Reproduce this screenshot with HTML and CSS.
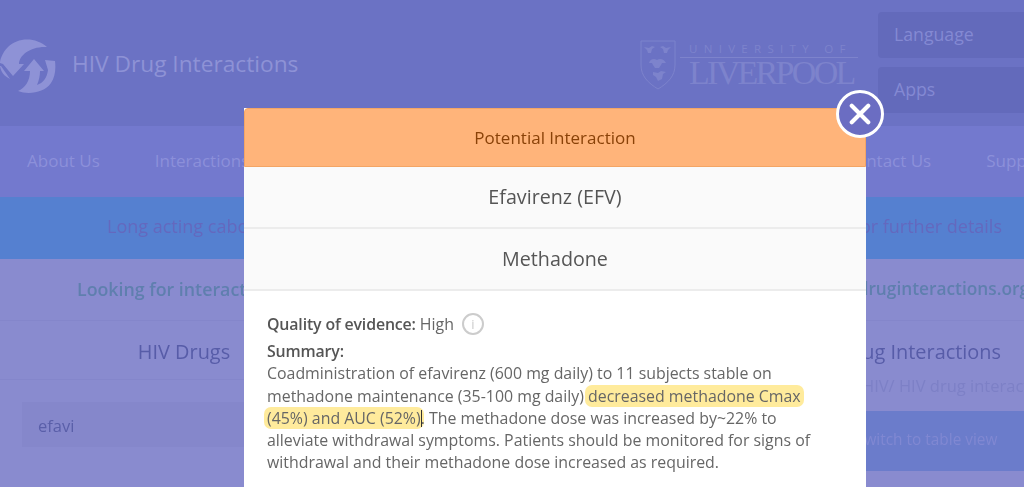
FILE: index.html
```html
<!DOCTYPE html>
<html lang="en">
<head>
<meta charset="utf-8">
<title>HIV Drug Interactions</title>
<link rel="stylesheet" href="styles.css">
</head>
<body>
<div class="page">
  <header class="top">
    <div class="brand">
      <svg class="logo" viewBox="0 0 56 58" aria-hidden="true">
        <path class="logo-fill" d="M47 11C36 1 18 1 8 11 2 17 0 24 0 27L3 28 13 40 24 28H19C19 19 31 10 47 11Z"/>
        <path class="logo-fill" d="M0 30C1 36 4 40 10 43L1 30Z"/>
        <path class="logo-fill" d="M18 55C28 59 44 57 51 47 55 41 56 34 55 25L45 24 48 34C47 42 43 47 37 49 39 44 40 40 40 35L44 35 34 23 24 35H30C30 45 25 52 18 55Z"/>
      </svg>
      <span class="brand-name">HIV Drug Interactions</span>
    </div>
    <div class="uni">
      <svg class="crest" viewBox="0 0 36 50" aria-hidden="true">
        <path class="crest-line" d="M1 1h34v24c0 11-7 18-17 24C8 43 1 36 1 25z"/>
        <path class="crest-fill" d="M4 7l5 1 3-2 3 1-3 2-1 4-3 0-1-3zM31 7l-5 1-3-2-3 1 3 2 1 4 3 0 1-3zM9 23c1-4 5-5 8-3 3-2 7-1 9 3l-4 0-1 2-2 3h-4l-2-3-1-2zM13 32l5 1 3-2 5 1-3 2-1 5-4 2-2-4-3-2z"/>
      </svg>
      <div class="uni-text">
        <span class="uni-of">UNIVERSITY OF</span>
        <span class="uni-name">LIVERPOOL</span>
      </div>
    </div>
    <div class="top-buttons">
      <div class="top-btn">Language</div>
      <div class="top-btn">Apps</div>
    </div>
  </header>
  <nav class="nav">
    <div class="nav-group"><span>About Us</span><span>Interactions</span></div>
    <div class="nav-group"><span>Contact Us</span><span>Support</span></div>
  </nav>
  <div class="alert"><span>Long acting cabotegravir</span><span>for further details</span></div>
  <div class="notice"><span>Looking for interactions</span><span class="notice-link">druginteractions.org</span></div>
  <section class="cols">
    <div class="col col-left">
      <h2 class="col-title">HIV Drugs</h2>
      <div class="search">efavi</div>
    </div>
    <div class="col col-right">
      <h2 class="col-title">Drug Interactions</h2>
      <p class="col-sub">HIV/ HIV drug interactions</p>
      <div class="switch">Switch to table view</div>
    </div>
  </section>
</div>

<div class="overlay">
  <div class="modal">
    <div class="modal-inner">
      <div class="modal-head">Potential Interaction</div>
      <div class="modal-row">Efavirenz (EFV)</div>
      <div class="modal-row">Methadone</div>
      <div class="modal-body">
        <p class="quality"><strong>Quality of evidence:</strong> High <span class="info">i</span></p>
        <p class="summary"><strong>Summary:</strong><br>
        Coadministration of efavirenz (600 mg daily) to 11 subjects stable on methadone maintenance (35-100 mg daily) <mark class="hl">decreased methadone Cmax (45%) and AUC (52%)</mark><span class="caret"></span>. The methadone dose was increased by~22% to alleviate withdrawal symptoms. Patients should be monitored for signs of withdrawal and their methadone dose increased as required.</p>
      </div>
    </div>
    <button class="close" aria-label="Close">
      <svg viewBox="0 0 24 24" aria-hidden="true"><path d="M3 3l18 18M21 3L3 21"/></svg>
    </button>
  </div>
</div>
</body>
</html>
```
FILE: styles.css
```css
* { box-sizing: border-box; }
html, body { margin: 0; height: 487px; overflow: hidden; }
body { font-family: "Open Sans", "Noto Sans", sans-serif; background: #898bcf; position: relative; }

.page { height: 487px; overflow: hidden; filter: blur(0.5px); }

.top { height: 126px; background: #6b72c4; display: flex; align-items: flex-start; }
.brand { display: flex; align-items: center; gap: 16px; width: 640px; padding-top: 36px; }
.logo { width: 56px; height: 58px; flex: none; }
.logo-fill { fill: #8e92d6; }
.brand-name { font-size: 22.7px; color: #8e92d6; font-weight: 500; padding-bottom: 3px; }

.uni { display: flex; width: 238px; padding-top: 40px; }
.crest { width: 36px; height: 50px; flex: none; }
.crest-line { fill: none; stroke: #7d83cc; stroke-width: 1; }
.crest-fill { fill: #7d83cc; }
.uni-text { display: flex; flex-direction: column; margin-left: 4px; width: 178px; }
.uni-of { font-size: 11.5px; letter-spacing: 6.3px; color: #7d83cc; padding-left: 9px; line-height: 16px; margin-top: 1px; white-space: nowrap; border-bottom: 1px solid #7d83cc; height: 17px; }
.uni-name { font-family: "Liberation Serif", serif; font-size: 34px; line-height: 30px; color: #7d83cc; padding-left: 9px; letter-spacing: -2.7px; }

.top-buttons { flex: 1; display: flex; flex-direction: column; gap: 9px; padding-top: 12px; }
.top-btn { height: 46px; background: #636abb; border-radius: 4px 0 0 4px; color: #8489d3; font-size: 17.7px; padding: 0 16px 3px; display: flex; align-items: center; }

.nav { height: 71px; background: #7379ce; display: flex; justify-content: space-between; align-items: center; color: #8c90da; font-size: 17px; padding: 0 0 2px 27px; white-space: nowrap; overflow: hidden; }
.nav-group { display: flex; gap: 55px; }
.nav-group:last-child { margin-right: -26px; }

.alert { height: 62px; background: #5580d0; color: #6468be; font-size: 18px; display: flex; justify-content: space-between; align-items: center; padding: 0 22px 4px 107px; }
.notice { height: 62px; color: #5f7fae; font-size: 17.8px; font-weight: 600; display: flex; justify-content: space-between; align-items: center; padding: 0 0 2px 77px; white-space: nowrap; border-bottom: 1px solid #8486cb; }
.notice-link { font-size: 17.3px; margin-right: -5px; }

.cols { display: flex; justify-content: space-between; }
.col-title { margin: 0; font-weight: 400; font-size: 19.9px; color: #575ca8; }
.col-left { width: 368px; }
.col-left .col-title { height: 59px; display: flex; align-items: center; justify-content: center; padding-top: 2px; border-bottom: 1px solid #8486cb; }
.search { margin: 22px 0 0 22px; height: 45px; background: #8587cb; color: #5a5fa9; font-size: 16.5px; padding: 2px 16px 0; display: flex; align-items: center; }
.col-right { width: 180px; }
.col-right .col-title { height: 59px; display: flex; align-items: center; white-space: nowrap; justify-content: flex-end; padding: 2px 23px 0 0; }
.col-sub { margin: 0; height: 31px; color: #7d80c6; font-size: 16.5px; white-space: nowrap; padding-left: 18px; line-height: 12px; }
.switch { height: 60px; background: #6b7ccb; color: #8088d2; font-size: 15.4px; display: flex; align-items: center; padding: 0 0 4px 12px; white-space: nowrap; }

.overlay { position: absolute; inset: 0; }
.modal { position: absolute; left: 244px; top: 108px; width: 622px; height: 379px; }
.modal-inner { height: 100%; background: #fff; filter: blur(0.35px); }
.close { position: absolute; right: -18px; top: -18px; width: 48px; height: 48px; border-radius: 50%; background: #6b6dc2; border: 3px solid #fff; padding: 10px; display: flex; }
.close svg { width: 100%; height: 100%; }
.close path { fill: none; stroke: #fff; stroke-width: 4.5; stroke-linecap: round; }
.modal-head { height: 59px; background: #ffb47a; border: 1px solid #f3a565; border-radius: 4px 4px 0 0; color: #8a4208; font-size: 17px; display: flex; align-items: center; justify-content: center; }
.modal-row { height: 62px; background: #fafafa; border-bottom: 2px solid #ececec; color: #555; font-size: 19.7px; padding-bottom: 2px; display: flex; align-items: center; justify-content: center; }
.modal-body { padding: 21px 23px 0; color: #666; font-size: 15.9px; line-height: 22.3px; }
.modal-body p { margin: 0; }
.modal-body strong { font-weight: 600; color: #555; letter-spacing: -.15px; }
.summary { padding-right: 30px; }
.quality { display: flex; align-items: center; gap: 4px; height: 24px; margin-bottom: 4px !important; }
.info { width: 22px; height: 22px; border: 2px solid #ccc; border-radius: 50%; color: #ccc; font-size: 13px; display: flex; align-items: center; justify-content: center; margin-left: 4px; }
.hl { background: #ffeb9c; color: inherit; border-radius: 7px; padding: 0 3px; margin: 0 -3px; -webkit-box-decoration-break: clone; box-decoration-break: clone; }
.caret { display: inline-block; width: 1px; height: 17px; background: #333; vertical-align: -3px; margin-right: -1px; }
```
